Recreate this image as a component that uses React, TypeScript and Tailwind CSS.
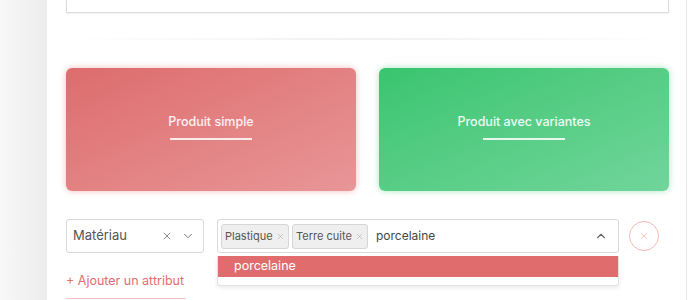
import { ChevronDown, ChevronUp, X } from 'lucide-react';

const font = { fontFamily: 'Inter, "Noto Sans", sans-serif' };

function Chip({ label, width }: { label: string; width: string }) {
  return (
    <span className={`flex h-[25px] shrink-0 items-center justify-between whitespace-nowrap rounded-[3px] border border-[#d6d6d6] bg-[#efefef] px-[3px] text-[11px] text-[#555] ${width}`}>
      {label}
      <X size={9} strokeWidth={1.5} className="shrink-0 text-[#aaa]" />
    </span>
  );
}

export default function App() {
  return (
    <div className="flex h-[300px] w-[690px] overflow-hidden bg-white" style={font}>
      <div className="w-[47px] shrink-0 bg-gradient-to-r from-[#f8f8f8] to-[#ececec]" />
      <div className="w-[640px] shrink-0 border-r border-[#e6e6e6] pl-[19px] pr-[17px]">
        <div className="h-[13px] border-x border-b border-[#dcdcdc] shadow-[0_1px_2px_rgba(0,0,0,0.06)]" />
        <div className="mt-[25px] h-[2px] bg-gradient-to-r from-transparent via-[#f1f1f1] to-transparent" />

        <div className="mt-[28px] grid grid-cols-2 gap-[23px]">
          <div className="flex h-[123px] items-center justify-center rounded-[6px] bg-gradient-to-br from-[#dd6c6d] to-[#e89698] shadow-[0_0_6px_rgba(221,108,109,0.45)]">
            <span className="relative -mt-[6px] pb-[8px] text-[12.5px] font-medium text-white/90">
              Produit simple
              <span className="absolute bottom-0 left-1/2 h-[2px] w-[82px] -translate-x-1/2 bg-white/85" />
            </span>
          </div>
          <div className="flex h-[123px] items-center justify-center rounded-[6px] bg-gradient-to-br from-[#38c56f] to-[#70d59b] shadow-[0_0_6px_rgba(56,197,111,0.45)]">
            <span className="relative -mt-[6px] pb-[8px] text-[12.5px] font-medium text-white/90">
              Produit avec variantes
              <span className="absolute bottom-0 left-1/2 h-[2px] w-[82px] -translate-x-1/2 bg-white/85" />
            </span>
          </div>
        </div>

        <div className="mt-[28px] flex items-center gap-[13px]">
          <div className="flex h-[34px] w-[138px] items-center rounded-[3px] border border-[#d9d9d9] pl-[6px] pr-[8px] text-[13px] text-[#555]">
            <span className="flex-1">Matériau</span>
            <X size={12} strokeWidth={1.5} className="mr-[8px] text-[#666]" />
            <ChevronDown size={14} strokeWidth={1.5} className="text-[#666]" />
          </div>
          <div className="relative flex h-[34px] w-[402px] items-center gap-[3px] rounded-[3px] border border-[#d9d9d9] pl-[3px] pr-[10px] text-[12px] text-[#444]">
            <Chip label="Plastique" width="w-[68px]" />
            <Chip label="Terre cuite" width="w-[76px]" />
            <span className="ml-[5px] flex-1">porcelaine</span>
            <ChevronUp size={14} strokeWidth={2} className="text-[#666]" />
            <div className="absolute left-[-1px] right-[-1px] top-[36px] z-10 h-[30px] rounded-b-[3px] border border-t-0 border-[#e2e2e2] bg-white shadow-[0_2px_4px_rgba(0,0,0,0.08)]">
              <div className="flex h-[21px] items-center bg-[#e06c6e] pl-[16px] text-[12.5px] text-white">porcelaine</div>
            </div>
          </div>
          <div className="ml-[-3px] flex h-[30px] w-[30px] items-center justify-center rounded-full border border-[#f5b8b8] text-[#f29b9b]">
            <X size={10} strokeWidth={1.5} />
          </div>
        </div>

        <div className="mt-[19px] inline-block border-b border-[#f4c2c2] pb-[7px] pr-[2px] text-[12.5px] text-[#e26d70]">
          + Ajouter un attribut
        </div>
      </div>
    </div>
  );
}
